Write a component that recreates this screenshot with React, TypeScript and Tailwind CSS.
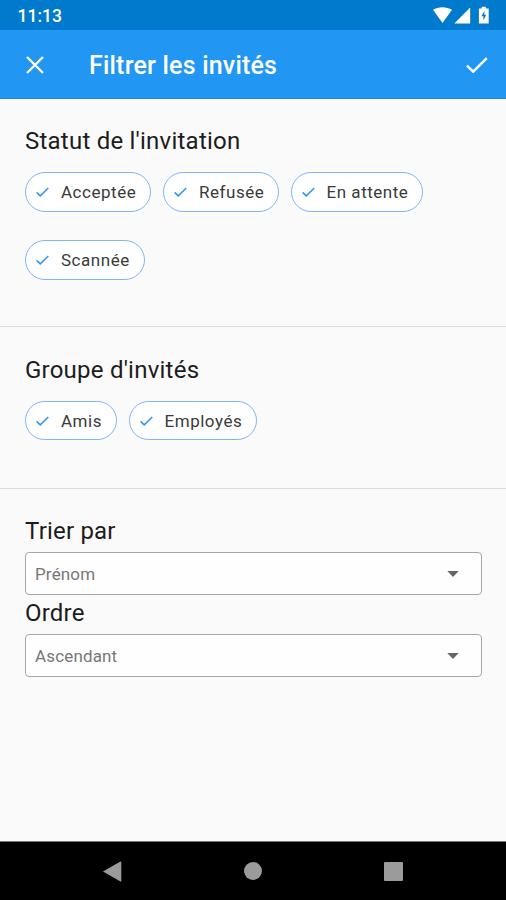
import React from "react";

function Check({ className }: { className: string }) {
  return (
    <svg viewBox="0 0 22 16" className={className} fill="none" stroke="currentColor">
      <path d="M1 8.6 L7.2 14.6 L20.8 1.2" strokeWidth="2.5" />
    </svg>
  );
}

function Chip({ label, className }: { label: string; className: string }) {
  return (
    <button
      className={`flex shrink-0 items-center rounded-full border border-[#7fb3fb] bg-white pl-[10px] text-[17px] leading-5 tracking-[0.53px] whitespace-nowrap text-[#3a3a3a] ${className}`}
    >
      <Check className="h-[10px] w-[13px] shrink-0 text-[#3096f5]" />
      <span className="ml-[12px]">{label}</span>
    </button>
  );
}

function Select({ value }: { value: string }) {
  return (
    <div className="flex h-[43px] w-[457px] items-center justify-between rounded-[4px] border border-[#a6a6a6] bg-[#fefefe] pr-[22px] pl-[9px]">
      <span className="mt-px text-[17px] leading-5 tracking-[0.15px] text-[#777]">{value}</span>
      <svg viewBox="0 0 12 6" className="h-[6px] w-[12px] fill-[#666]">
        <path d="M.3 0H11.7L6 6Z" />
      </svg>
    </div>
  );
}

export default function App() {
  return (
    <div className="flex h-[900px] w-[506px] flex-col overflow-hidden bg-[#fafafa] font-[Roboto,sans-serif]">
      <div className="flex h-[30px] shrink-0 items-center bg-[#007acc] pr-4 pl-[17.5px] text-white">
        <span className="mt-[2px] text-[17.5px] leading-5 font-medium">11:13</span>
        <svg viewBox="0 0 58 18" className="ml-auto h-[18px] w-[58px] fill-white">
          <path d="M1 3.8C6 .4 14.5 .4 20 3.8L10.5 17Z" />
          <path d="M22.3 17.6L38.2 1.6V17.6Z" />
          <path
            fillRule="evenodd"
            d="M46.9 2.5H49.7V0.7H53.8V2.5H56.7V17.6H46.9ZM52.6 4.8L49.4 10.2H51.4V14.5L54.2 8.8H52.3Z"
          />
        </svg>
      </div>
      <header className="flex h-[69px] shrink-0 items-center border-b border-[#1c86dd] bg-[#2196f3] pr-[18px] pl-[26px] text-white">
        <svg viewBox="0 0 18 18" className="mt-px h-[18px] w-[18px]" fill="none" stroke="currentColor" strokeWidth="2.3">
          <path d="M1 1L17 17M17 1L1 17" />
        </svg>
        <h1 className="mt-[3px] ml-[45px] text-[25px] leading-7 font-medium tracking-[0.2px]">Filtrer les invités</h1>
        <Check className="mt-px ml-auto h-4 w-[22px]" />
      </header>
      <main className="flex-1">
        <section className="h-[228px] border-b border-[#dcdcdc] pt-[28px] pl-[25px]">
          <h2 className="text-[24px] leading-7 tracking-[0.23px] text-[#1c1c1c]">Statut de l'invitation</h2>
          <div className="mt-[17px] flex gap-3">
            <Chip label="Acceptée" className="h-[39.5px] w-[126px]" />
            <Chip label="Refusée" className="h-[39.5px] w-[115.5px]" />
            <Chip label="En attente" className="h-[39.5px] w-[132px]" />
          </div>
          <div className="mt-[28px] flex">
            <Chip label="Scannée" className="h-10 w-[119.5px]" />
          </div>
        </section>
        <section className="h-[162px] border-b border-[#dcdcdc] pt-[29px] pl-[25px]">
          <h2 className="text-[24px] leading-7 tracking-[0.23px] text-[#1c1c1c]">Groupe d'invités</h2>
          <div className="mt-[17px] flex gap-3">
            <Chip label="Amis" className="h-[39px] w-[91.5px]" />
            <Chip label="Employés" className="h-[39px] w-[128.5px]" />
          </div>
        </section>
        <section className="pt-[28px] pl-[25px]">
          <h2 className="mb-[7px] text-[24px] leading-7 tracking-[0.2px] text-[#1c1c1c]">Trier par</h2>
          <Select value="Prénom" />
          <h2 className="mt-1 mb-[7px] text-[24px] leading-7 tracking-[0.2px] text-[#1c1c1c]">Ordre</h2>
          <Select value="Ascendant" />
        </section>
      </main>
      <nav className="flex h-[59px] shrink-0 items-center border-t border-[#777] bg-black pl-[103px]">
        <svg viewBox="0 0 19 21" className="h-[21px] w-[19px] fill-[#9b9b9b]">
          <path d="M0 10.5L17 .7Q18.3 0 18.3 1V20Q18.3 21 17 20.3Z" />
        </svg>
        <div className="ml-[122px] h-[18px] w-[18px] rounded-full bg-[#9b9b9b]" />
        <div className="ml-[122px] h-[19px] w-[19px] rounded-[1px] bg-[#9b9b9b]" />
      </nav>
    </div>
  );
}
